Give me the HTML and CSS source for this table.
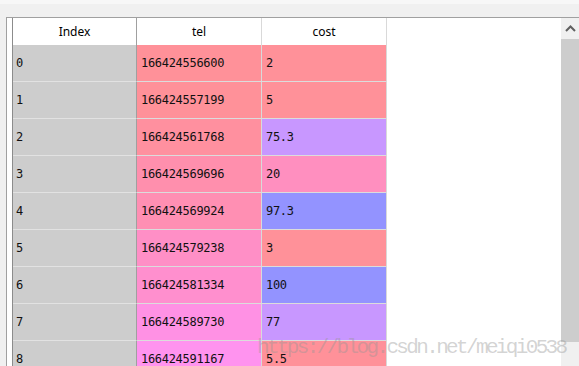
FILE: index.html
```html
<!DOCTYPE html>
<html lang="en">
<head>
    <meta charset="UTF-8">
    <title>DataFrame viewer</title>
    <link rel="stylesheet" href="styles.css">
</head>
<body>
    <div class="topbar"></div>

    <div class="frame">
        <div class="view">
            <div class="table" id="table">
                <div class="cell head idx">Index</div>
                <div class="cell head">tel</div>
                <div class="cell head">cost</div>
            </div>
        </div>

        <div class="scrollbar">
            <div class="sb-up">
                <svg width="18" height="21" viewBox="0 0 18 21">
                    <polyline points="5,13 9.5,8.5 14,13" fill="none" stroke="#606060" stroke-width="2"/>
                </svg>
            </div>
            <div class="sb-thumb"></div>
            <div class="sb-track"></div>
        </div>

        <div class="watermark">https://blog.csdn.net/meiqi0538</div>
    </div>

    <script>
        const table = document.getElementById("table");

        const rows = [
            { tel: "166424556600", telBg: "#ff9199", cost: "2", costBg: "#ff9199" },
            { tel: "166424557199", telBg: "#ff9199", cost: "5", costBg: "#ff9199" },
            { tel: "166424561768", telBg: "#ff909f", cost: "75.3", costBg: "#c897ff" },
            { tel: "166424569696", telBg: "#ff8fad", cost: "20", costBg: "#ff8fbf" },
            { tel: "166424569924", telBg: "#ff8fb3", cost: "97.3", costBg: "#9393ff" },
            { tel: "166424579238", telBg: "#ff8fc6", cost: "3", costBg: "#ff9199" },
            { tel: "166424581334", telBg: "#ff8fce", cost: "100", costBg: "#9393ff" },
            { tel: "166424589730", telBg: "#ff91e4", cost: "77", costBg: "#c897ff" },
            { tel: "166424591167", telBg: "#ff93ef", cost: "5.5", costBg: "#ff9199" },
        ];

        rows.forEach((row, i) => {
            const idx = document.createElement("div");
            idx.className = "cell idx";
            idx.textContent = i;
            table.appendChild(idx);

            const tel = document.createElement("div");
            tel.className = "cell";
            tel.textContent = row.tel;
            tel.style.background = row.telBg;
            table.appendChild(tel);

            const cost = document.createElement("div");
            cost.className = "cell";
            cost.textContent = row.cost;
            cost.style.background = row.costBg;
            table.appendChild(cost);
        });
    </script>
</body>
</html>
```

FILE: styles.css
```css
* {
    margin: 0;
    padding: 0;
    box-sizing: border-box;
}

body {
    background: #f0f0f0;
    height: 366px;
    overflow: hidden;
}

.topbar {
    height: 17px;
    background: linear-gradient(#f7f7f7 0 4px, #f0f0f0 4px);
}

.frame {
    position: relative;
    display: flex;
    height: 349px;
    margin-left: 6px;
    border-top: 1px solid #a0a0a0;
    border-left: 1px solid #a0a0a0;
}

.view {
    flex: 1;
    overflow: hidden;
    background: #fff;
    padding-left: 5px;
}

.table {
    display: grid;
    grid-template-columns: 124px 125px 125px;
    grid-template-rows: 27px;
    grid-auto-rows: 37px;
    width: 375px;
    border-left: 1px solid #8c8c8c;
}

.cell {
    display: flex;
    align-items: center;
    padding-left: 4px;
    border-right: 1px solid #d9d9d9;
    border-bottom: 1px solid #dcdcdc;
    font-family: "DejaVu Sans Mono", monospace;
    font-size: 12px;
    letter-spacing: -0.3px;
    color: #111;
}

.cell.idx {
    background: #cdcdcd;
    border-right-color: #a0a0a0;
    border-bottom-color: #e2e2e2;
    padding-left: 3px;
}

.cell.head {
    justify-content: center;
    padding-left: 0;
    background: #fff;
    border-bottom: none;
    font-family: "Noto Sans", sans-serif;
    font-size: 12px;
    letter-spacing: 0;
    color: #000;
}

/* watermark floats over table and scrollbar */
.watermark {
    position: absolute;
    left: 250px;
    top: 319px;
    font-family: "Liberation Mono", monospace;
    font-size: 21px;
    line-height: 21px;
    letter-spacing: -2.65px;
    color: rgba(150, 150, 150, 0.42);
    white-space: nowrap;
    pointer-events: none;
}

.scrollbar {
    width: 18px;
    display: flex;
    flex-direction: column;
}

.sb-up {
    height: 21px;
    background: #f0f0f0;
}

.sb-up svg {
    display: block;
}

.sb-thumb {
    height: 303px;
    background: #cdcdcd;
}

.sb-track {
    flex: 1;
    background: #f0f0f0;
}
```
